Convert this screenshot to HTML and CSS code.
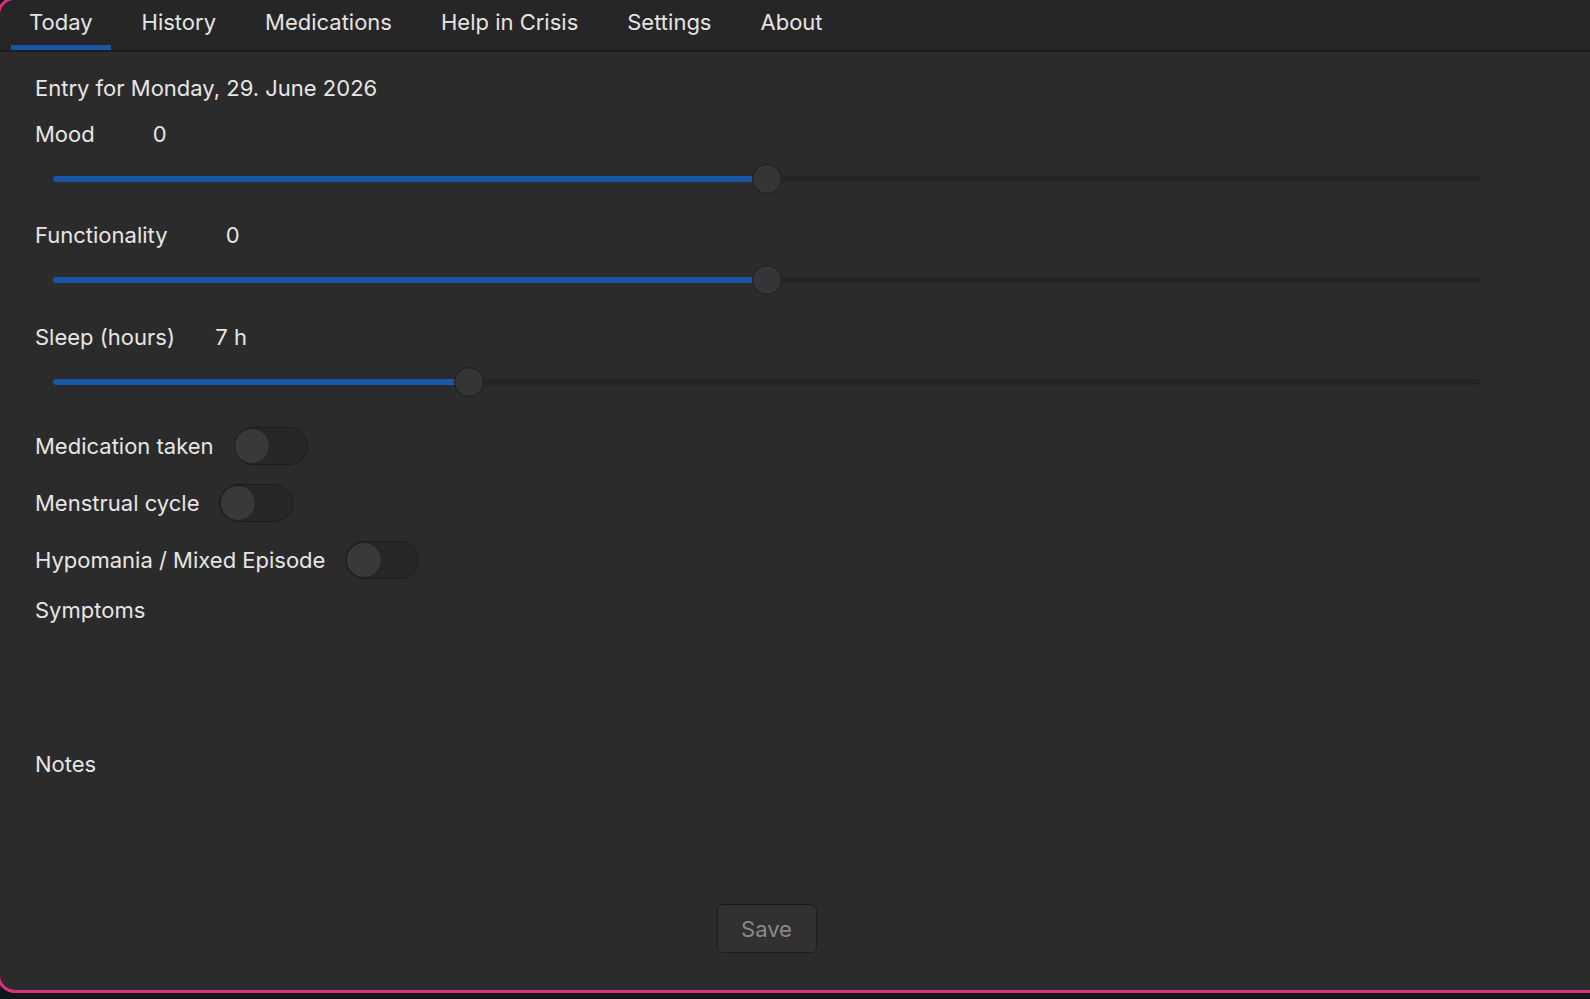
FILE: index.html
```html
<!DOCTYPE html>
<html lang="en">
<head>
<meta charset="utf-8">
<title>Today</title>
<link rel="stylesheet" href="styles.css">
</head>
<body>
<div class="window">
  <nav class="tabbar">
    <div class="tab active">Today</div>
    <div class="tab">History</div>
    <div class="tab">Medications</div>
    <div class="tab">Help in Crisis</div>
    <div class="tab">Settings</div>
    <div class="tab">About</div>
  </nav>
  <main class="content">
    <div class="entry-title">Entry for Monday, 29. June 2026</div>

    <section class="slider-group">
      <div class="label-row"><span class="label">Mood</span><span class="value">0</span></div>
      <div class="slider">
        <div class="track"><div class="fill" style="width:50%"></div><div class="thumb" style="left:50%"></div></div>
      </div>
    </section>

    <section class="slider-group">
      <div class="label-row"><span class="label">Functionality</span><span class="value">0</span></div>
      <div class="slider">
        <div class="track"><div class="fill" style="width:50%"></div><div class="thumb" style="left:50%"></div></div>
      </div>
    </section>

    <section class="slider-group">
      <div class="label-row"><span class="label">Sleep (hours)</span><span class="value">7 h</span></div>
      <div class="slider">
        <div class="track"><div class="fill" style="width:29.17%"></div><div class="thumb" style="left:29.17%"></div></div>
      </div>
    </section>

    <div class="toggle-row"><span class="label">Medication taken</span><span class="switch"><span class="knob"></span></span></div>
    <div class="toggle-row"><span class="label">Menstrual cycle</span><span class="switch"><span class="knob"></span></span></div>
    <div class="toggle-row"><span class="label">Hypomania / Mixed Episode</span><span class="switch"><span class="knob"></span></span></div>

    <div class="section-title symptoms">Symptoms</div>
    <div class="symptoms-area"></div>
    <div class="section-title notes">Notes</div>
    <div class="notes-area"></div>

    <div class="actions"><button class="save" type="button">Save</button></div>
  </main>
</div>
</body>
</html>
```
FILE: styles.css
```css
* { box-sizing: border-box; }

html, body {
  margin: 0;
  padding: 0;
  width: 1590px;
  height: 999px;
  overflow: hidden;
  background: #0c161c;
  font-family: Inter, "Noto Sans", sans-serif;
  color: #e6e6e6;
}

.window {
  margin: -3px 0 0 -3px;
  width: 1626px;
  height: 996px;
  border: 3px solid #e0307a;
  border-radius: 18px;
  background: #2b2b2b;
  overflow: hidden;
  display: flex;
  flex-direction: column;
}

.tabbar {
  height: 52px;
  flex: none;
  background: #262626;
  border-bottom: 2px solid #1d1d1d;
  display: flex;
  align-items: stretch;
  padding-left: 11px;
  gap: 13px;
}

.tab {
  padding: 0 18px;
  font-size: 22px;
  line-height: 45px;
  height: 50px;
  color: #e4e4e4;
  border-bottom: 5px solid transparent;
}

.tab.active {
  border-bottom-color: #1b55a5;
}

.content {
  flex: 1;
  display: flex;
  flex-direction: column;
  padding: 16px 122px 0 35px;
  font-size: 22px;
}

.entry-title {
  height: 40px;
  line-height: 40px;
  margin-bottom: 6px;
}

.slider-group {
  height: 101.25px;
  display: flex;
  flex-direction: column;
}

.label-row {
  height: 40px;
  display: flex;
  align-items: center;
}

.value {
  min-width: 72px;
  text-align: right;
}

.slider {
  height: 50px;
  display: flex;
  align-items: center;
  padding: 0 18px;
}

.track {
  position: relative;
  flex: 1;
  height: 6px;
  border-radius: 3px;
  background: #242424;
}

.fill {
  height: 100%;
  border-radius: 3px;
  background: #1b55a5;
}

.thumb {
  position: absolute;
  top: 50%;
  width: 30px;
  height: 30px;
  margin: -15px 0 0 -15px;
  border-radius: 50%;
  background: #353535;
  border: 1.5px solid #1c1c1c;
}

.toggle-row {
  height: 57px;
  display: flex;
  align-items: center;
  gap: 20px;
}

.switch {
  width: 74px;
  height: 38px;
  border-radius: 19px;
  background: #272727;
  border: 1.5px solid #1c1c1c;
  display: flex;
  align-items: center;
}

.knob {
  width: 36px;
  height: 36px;
  border-radius: 50%;
  background: #393939;
  border: 1px solid #222;
  margin-left: -0.5px;
}

.section-title {
  line-height: 40px;
}

.symptoms {
  height: 43px;
  line-height: 43px;
}

.symptoms-area { height: 112px; }

.notes { height: 40px; }

.notes-area { height: 120.5px; }

.actions {
  display: flex;
  justify-content: center;
}

.save {
  width: 100px;
  height: 49px;
  border-radius: 6px;
  background: #313131;
  border: 1.5px solid #1d1d1d;
  color: #8a8a8a;
  font-family: Inter, "Noto Sans", sans-serif;
  font-size: 22px;
}
```
